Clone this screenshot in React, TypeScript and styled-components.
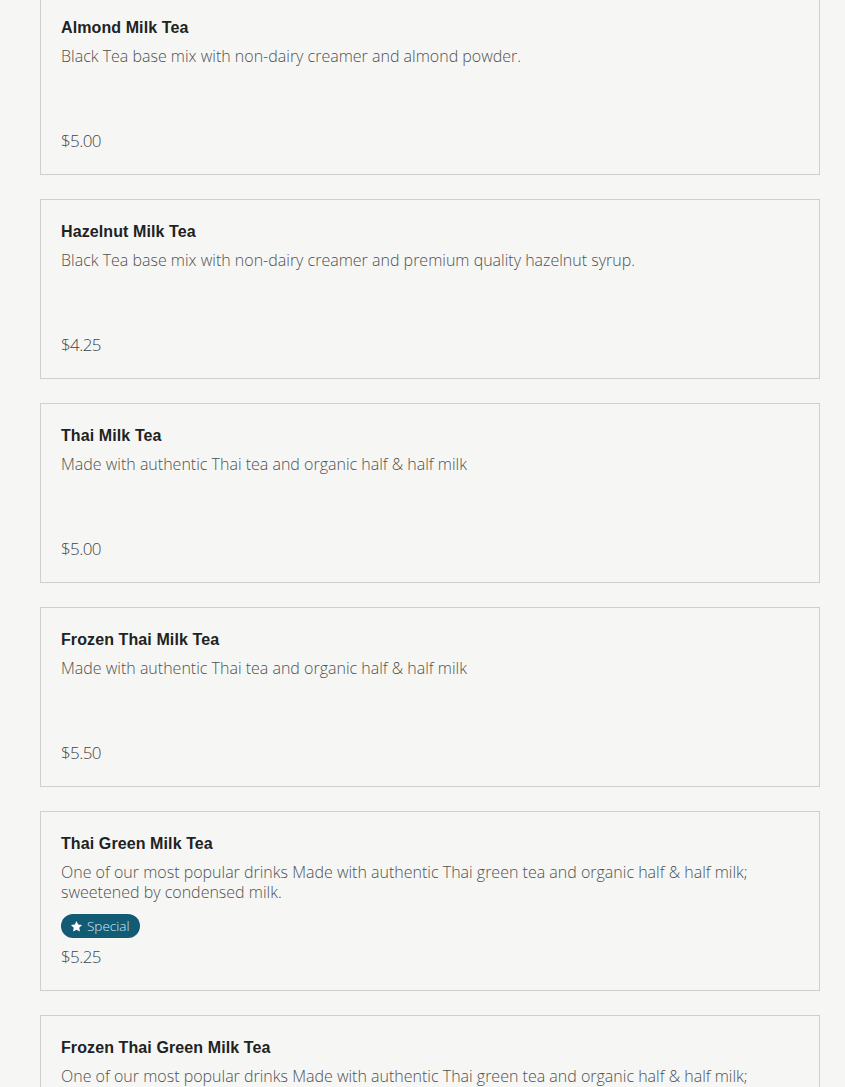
import React from "react";
import styled, { createGlobalStyle } from "styled-components";

const Global = createGlobalStyle`
  html, body { margin: 0; padding: 0; background: #f6f7f5; }
  body { font-family: "Open Sans", "Liberation Sans", sans-serif; overflow: hidden; }
`;

const Page = styled.div`
  padding: 0 25px 0 40px;
  margin-top: -5px;
  display: flex;
  flex-direction: column;
  gap: 24px;
`;

const Card = styled.div`
  box-sizing: border-box;
  height: 180px;
  border: 1px solid #cfd0ce;
  background: #f6f7f5;
  padding: 20px 20px 21px;
  display: flex;
  flex-direction: column;
`;

const Title = styled.div`
  font-family: "Liberation Sans", Arial, sans-serif;
  font-weight: 700;
  font-size: 16px;
  line-height: 24px;
  color: #222;
  letter-spacing: 0.1px;
`;

const Desc = styled.div`
  margin-top: 6px;
  font-family: "Open Sans", sans-serif;
  font-weight: 300;
  font-size: 16px;
  line-height: 20px;
  color: #505050;
  letter-spacing: 0;
`;

const Badge = styled.div`
  margin-top: 12px;
  align-self: flex-start;
  height: 24px;
  box-sizing: border-box;
  padding: 0 11px 0 9px;
  border-radius: 12px;
  background: #125b75;
  color: #d9ecf2;
  display: flex;
  align-items: center;
  gap: 4px;
  font-family: "Open Sans", sans-serif;
  font-weight: 300;
  font-size: 13.5px;
`;

const Price = styled.div`
  margin-top: auto;
  font-family: "Open Sans", sans-serif;
  font-weight: 300;
  font-size: 17px;
  line-height: 24px;
  color: #444;
  letter-spacing: -0.6px;
`;

const PriceWithBadge = styled(Price)`
  margin-top: 7px;
`;

const Spacer = styled.div`
  flex: 1;
`;

type Item = { name: string; desc: string; price: string; special?: boolean };

const items: Item[] = [
  { name: "Almond Milk Tea", desc: "Black Tea base mix with non-dairy creamer and almond powder.", price: "$5.00" },
  { name: "Hazelnut Milk Tea", desc: "Black Tea base mix with non-dairy creamer and premium quality hazelnut syrup.", price: "$4.25" },
  { name: "Thai Milk Tea", desc: "Made with authentic Thai tea and organic half & half milk", price: "$5.00" },
  { name: "Frozen Thai Milk Tea", desc: "Made with authentic Thai tea and organic half & half milk", price: "$5.50" },
  {
    name: "Thai Green Milk Tea",
    desc: "One of our most popular drinks Made with authentic Thai green tea and organic half & half milk; sweetened by condensed milk.",
    price: "$5.25",
    special: true,
  },
  {
    name: "Frozen Thai Green Milk Tea",
    desc: "One of our most popular drinks Made with authentic Thai green tea and organic half & half milk; sweetened by condensed milk.",
    price: "$5.75",
    special: true,
  },
];

const Star = () => (
  <svg width="13" height="13" viewBox="0 0 24 24" fill="#ffffff">
    <path d="M12 1.8l3.1 6.6 7.2.9-5.3 5 1.4 7.1L12 17.9l-6.4 3.5L7 14.3l-5.3-5 7.2-.9z" strokeLinejoin="round" />
  </svg>
);

export default function App() {
  return (
    <>
      <Global />
      <Page>
        {items.map((it) => (
          <Card key={it.name}>
            <Title>{it.name}</Title>
            <Desc>{it.desc}</Desc>
            {it.special ? (
              <>
                <Spacer />
                <Badge>
                  <Star />
                  Special
                </Badge>
                <PriceWithBadge>{it.price}</PriceWithBadge>
              </>
            ) : (
              <Price>{it.price}</Price>
            )}
          </Card>
        ))}
      </Page>
    </>
  );
}
